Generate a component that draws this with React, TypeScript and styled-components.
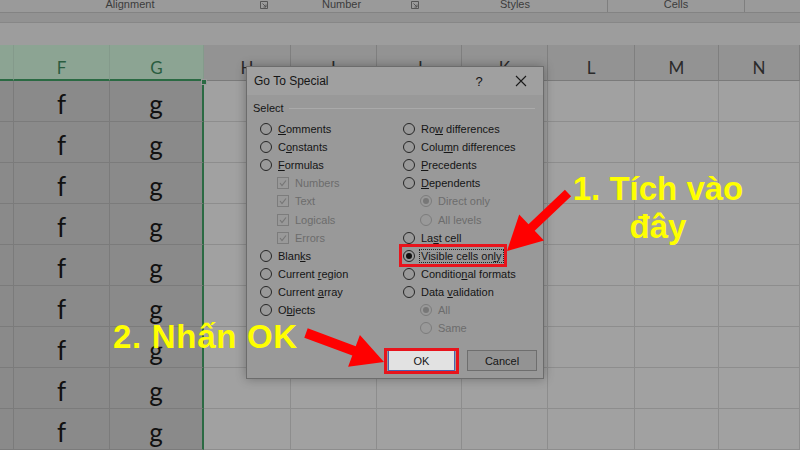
import React from 'react';
import styled, { createGlobalStyle } from 'styled-components';

const GlobalStyle = createGlobalStyle`
  * { box-sizing: border-box; }
  html, body { margin: 0; padding: 0; background: #9b9b9b; }
  body { font-family: "Liberation Sans", Arial, sans-serif; }
`;

const Page = styled.div`
  position: relative;
  width: 800px;
  height: 450px;
  overflow: hidden;
  display: flex;
  flex-direction: column;
  background: #9b9b9b;
`;

// ribbon group captions
const RibbonBar = styled.div`
  display: flex;
  height: 12px;
  background: #9a9a9a;
  overflow: hidden;
  font-size: 11px;
  color: #3c3c3c;
`;

const Group = styled.div<{ $w: number; $sep?: boolean }>`
  display: flex;
  align-items: flex-start;
  width: ${p => p.$w}px;
  flex-shrink: 0;
  border-right: ${p => (p.$sep ? '1px solid #7f7f7f' : 'none')};
`;

const GroupLabel = styled.div`
  flex: 1;
  text-align: center;
  line-height: 11px;
  margin-top: -1px;
`;

const Launcher = styled.svg`
  width: 8px;
  height: 8px;
  margin: 1px 4px 0 0;
`;

const Band = styled.div`
  height: 10px;
  background: #929292;
  border-top: 1px solid #838383;
`;

const FormulaArea = styled.div`
  height: 24px;
  background: #9d9d9d;
  border-top: 1px solid #878787;
`;

const Sheet = styled.div`
  position: relative;
  flex: 1;
  display: flex;
  flex-direction: column;
`;

const HeaderRow = styled.div`
  display: flex;
  height: 36px;
`;

const HeaderCell = styled.div<{ $w: number; $sel?: boolean }>`
  width: ${p => p.$w}px;
  flex-shrink: 0;
  padding-top: 10px;
  text-align: center;
  font-family: Lato, "Open Sans", sans-serif;
  font-size: 17px;
  line-height: 26px;
  background: ${p => (p.$sel ? '#8ca493' : '#939393')};
  color: ${p => (p.$sel ? '#2a5c3f' : '#2a2a2a')};
  border-right: 1px solid ${p => (p.$sel ? '#849a8b' : '#7f7f7f')};
  border-bottom: ${p => (p.$sel ? '2px solid #2b6a43' : '1px solid #7a7a7a')};
`;

const Row = styled.div`
  display: flex;
  height: 41px;
`;

const Cell = styled.div<{ $w: number; $sel?: boolean; $edge?: boolean }>`
  width: ${p => p.$w}px;
  flex-shrink: 0;
  padding-top: 8px;
  text-align: center;
  font-family: Lato, "Open Sans", sans-serif;
  font-size: 26px;
  line-height: 30px;
  color: #111;
  overflow: hidden;
  background: ${p => (p.$sel ? '#8a8a8a' : '#a1a1a1')};
  border-bottom: 1px solid ${p => (p.$sel ? '#7b7b7b' : '#8d8d8d')};
  border-right: ${p =>
    p.$edge ? '2px solid #2b6a43' : `1px solid ${p.$sel ? '#7b7b7b' : '#8d8d8d'}`};
`;

const Handle = styled.div`
  position: absolute;
  left: 201px;
  top: 34px;
  width: 6px;
  height: 6px;
  background: #2b6a43;
  border: 1px solid #9a9a9a;
`;

// dialog
const Dialog = styled.div`
  position: absolute;
  left: 246px;
  top: 66px;
  width: 298px;
  height: 313px;
  display: flex;
  flex-direction: column;
  background: #999999;
  border: 1px solid #6c6c6c;
  box-shadow: 0 0 10px rgba(0, 0, 0, 0.3);
  font-size: 11px;
  color: #151515;
`;

const TitleBar = styled.div`
  display: flex;
  align-items: center;
  height: 28px;
  padding: 0 1px 0 7px;
  background: #a0a0a0;
`;

const Title = styled.div`
  flex: 1;
  font-size: 12px;
`;

const TitleBtn = styled.div`
  width: 42px;
  display: flex;
  justify-content: center;
  align-items: center;
  font-size: 13px;
`;

const Body = styled.div`
  flex: 1;
  display: flex;
  flex-direction: column;
  padding: 0 6px 7px 6px;
`;

const GroupHead = styled.div`
  display: flex;
  align-items: center;
  height: 25px;
`;

const Rule = styled.div`
  flex: 1;
  height: 1px;
  margin: 1px 2px 0 5px;
  background: #aaaaaa;
`;

const Options = styled.div`
  display: grid;
  grid-template-columns: 143px 1fr;
  padding-left: 7px;
`;

const Column = styled.div`
  display: flex;
  flex-direction: column;
`;

const Option = styled.div<{ $indent?: boolean; $off?: boolean }>`
  display: flex;
  align-items: center;
  gap: 4px;
  height: 18.1px;
  padding-left: ${p => (p.$indent ? 17 : 0)}px;
  color: ${p => (p.$off ? '#6c6c6c' : '#151515')};
`;

const Radio = styled.span<{ $on?: boolean; $off?: boolean }>`
  position: relative;
  width: 12px;
  height: 12px;
  flex-shrink: 0;
  border-radius: 50%;
  border: 1px solid ${p => (p.$off ? '#7c7c7c' : '#262626')};
  &::after {
    content: '';
    display: ${p => (p.$on ? 'block' : 'none')};
    position: absolute;
    left: 2px;
    top: 2px;
    width: 6px;
    height: 6px;
    border-radius: 50%;
    background: ${p => (p.$off ? '#777' : '#111')};
  }
`;

const Check = styled.svg`
  width: 12px;
  height: 12px;
  flex-shrink: 0;
  border: 1px solid #7c7c7c;
`;

const Label = styled.span<{ $focus?: boolean }>`
  padding: 0 1px;
  line-height: 12px;
  border: 1px ${p => (p.$focus ? 'dotted #222' : 'solid transparent')};
`;

const Mn = styled.span`
  text-decoration: underline;
`;

const ButtonRow = styled.div`
  margin-top: auto;
  display: flex;
  justify-content: flex-end;
  gap: 12px;
`;

const Button = styled.div<{ $w: number; $primary?: boolean }>`
  width: ${p => p.$w}px;
  height: 21px;
  display: flex;
  align-items: center;
  justify-content: center;
  background: ${p => (p.$primary ? '#e2e2e2' : '#939393')};
  border: 1px solid ${p => (p.$primary ? '#4a64b0' : '#6e6e6e')};
`;

// annotations
const Overlay = styled.svg`
  position: absolute;
  left: 0;
  top: 0;
  pointer-events: none;
`;

const RedBox = styled.div<{ $x: number; $y: number; $w: number; $h: number }>`
  position: absolute;
  left: ${p => p.$x}px;
  top: ${p => p.$y}px;
  width: ${p => p.$w}px;
  height: ${p => p.$h}px;
  border: 3px solid #e8141c;
`;

const Callout = styled.div<{ $x: number; $y: number; $w?: number; $track?: number }>`
  position: absolute;
  left: ${p => p.$x}px;
  top: ${p => p.$y}px;
  width: ${p => (p.$w ? `${p.$w}px` : 'auto')};
  text-align: center;
  white-space: nowrap;
  font-family: "Liberation Sans", Arial, sans-serif;
  font-weight: bold;
  font-size: 33px;
  line-height: 38px;
  letter-spacing: ${p => p.$track ?? 0}px;
  color: #ffff00;
`;

const columns = [
  { w: 14, label: '', sel: true },
  { w: 96, label: 'F', sel: true, text: 'f' },
  { w: 94, label: 'G', sel: true, text: 'g', edge: true },
  { w: 87, label: 'H' },
  { w: 86, label: 'I' },
  { w: 85, label: 'J' },
  { w: 86, label: 'K' },
  { w: 87, label: 'L' },
  { w: 84, label: 'M' },
  { w: 81, label: 'N' },
];

type Opt = {
  text: string;
  key?: number;
  kind: 'radio' | 'check';
  on?: boolean;
  off?: boolean;
  indent?: boolean;
  focus?: boolean;
};

const leftOpts: Opt[] = [
  { text: 'Comments', key: 0, kind: 'radio' },
  { text: 'Constants', key: 1, kind: 'radio' },
  { text: 'Formulas', key: 0, kind: 'radio' },
  { text: 'Numbers', kind: 'check', off: true, indent: true },
  { text: 'Text', kind: 'check', off: true, indent: true },
  { text: 'Logicals', kind: 'check', off: true, indent: true },
  { text: 'Errors', kind: 'check', off: true, indent: true },
  { text: 'Blanks', key: 4, kind: 'radio' },
  { text: 'Current region', key: 8, kind: 'radio' },
  { text: 'Current array', key: 8, kind: 'radio' },
  { text: 'Objects', key: 1, kind: 'radio' },
];

const rightOpts: Opt[] = [
  { text: 'Row differences', key: 2, kind: 'radio' },
  { text: 'Column differences', key: 4, kind: 'radio' },
  { text: 'Precedents', key: 0, kind: 'radio' },
  { text: 'Dependents', key: 0, kind: 'radio' },
  { text: 'Direct only', kind: 'radio', off: true, on: true, indent: true },
  { text: 'All levels', kind: 'radio', off: true, indent: true },
  { text: 'Last cell', key: 2, kind: 'radio' },
  { text: 'Visible cells only', key: 16, kind: 'radio', on: true, focus: true },
  { text: 'Conditional formats', key: 8, kind: 'radio' },
  { text: 'Data validation', key: 5, kind: 'radio' },
  { text: 'All', kind: 'radio', off: true, on: true, indent: true },
  { text: 'Same', kind: 'radio', off: true, indent: true },
];

const withKey = (text: string, key?: number) => {
  if (key === undefined) return text;
  return (
    <>
      {text.slice(0, key)}
      <Mn>{text[key]}</Mn>
      {text.slice(key + 1)}
    </>
  );
};

const OptionRow = ({ o }: { o: Opt }) => (
  <Option $indent={o.indent} $off={o.off}>
    {o.kind === 'radio' ? (
      <Radio $on={o.on} $off={o.off} />
    ) : (
      <Check viewBox="0 0 10 10">
        <polyline points="2,5 4,7.5 8,2.5" fill="none" stroke="#767676" strokeWidth="1.2" />
      </Check>
    )}
    <Label $focus={o.focus}>{withKey(o.text, o.key)}</Label>
  </Option>
);

// polygon for a straight block arrow from tail to tip
const arrow = (tx: number, ty: number, px: number, py: number, shaft: number, headL: number, headW: number) => {
  const dx = px - tx;
  const dy = py - ty;
  const len = Math.hypot(dx, dy);
  const ux = dx / len;
  const uy = dy / len;
  const nx = -uy;
  const ny = ux;
  const bx = px - ux * headL;
  const by = py - uy * headL;
  const s = shaft / 2;
  const h = headW / 2;
  const pts = [
    [tx + nx * s, ty + ny * s],
    [bx + nx * s, by + ny * s],
    [bx + nx * h, by + ny * h],
    [px, py],
    [bx - nx * h, by - ny * h],
    [bx - nx * s, by - ny * s],
    [tx - nx * s, ty - ny * s],
  ];
  return pts.map(p => `${p[0].toFixed(1)},${p[1].toFixed(1)}`).join(' ');
};

const LauncherIcon = () => (
  <Launcher viewBox="0 0 8 8">
    <path d="M0.5 7.5V0.5H7.5V7.5Z" fill="none" stroke="#555" strokeWidth="1" />
    <path d="M2.5 2.5L6 6M6 3.5V6H3.5" fill="none" stroke="#555" strokeWidth="1" />
  </Launcher>
);

export default function App() {
  return (
    <>
      <GlobalStyle />
      <Page>
        <RibbonBar>
          <Group $w={272}>
            <GroupLabel>Alignment</GroupLabel>
            <LauncherIcon />
          </Group>
          <Group $w={151}>
            <GroupLabel>Number</GroupLabel>
            <LauncherIcon />
          </Group>
          <Group $w={185} $sep>
            <GroupLabel>Styles</GroupLabel>
          </Group>
          <Group $w={137} $sep>
            <GroupLabel>Cells</GroupLabel>
          </Group>
        </RibbonBar>
        <Band />
        <FormulaArea />
        <Sheet>
          <HeaderRow>
            {columns.map((c, i) => (
              <HeaderCell key={i} $w={c.w} $sel={c.sel}>
                {c.label}
              </HeaderCell>
            ))}
          </HeaderRow>
          {Array.from({ length: 9 }).map((_, r) => (
            <Row key={r}>
              {columns.map((c, i) => (
                <Cell key={i} $w={c.w} $sel={c.sel} $edge={c.edge}>
                  {c.text}
                </Cell>
              ))}
            </Row>
          ))}
          <Handle />
        </Sheet>

        <Dialog>
          <TitleBar>
            <Title>Go To Special</Title>
            <TitleBtn>?</TitleBtn>
            <TitleBtn>
              <svg width="12" height="12" viewBox="0 0 12 12">
                <path d="M1 1L11 11M11 1L1 11" stroke="#1a1a1a" strokeWidth="1.1" />
              </svg>
            </TitleBtn>
          </TitleBar>
          <Body>
            <GroupHead>
              Select
              <Rule />
            </GroupHead>
            <Options>
              <Column>
                {leftOpts.map(o => (
                  <OptionRow key={o.text} o={o} />
                ))}
              </Column>
              <Column>
                {rightOpts.map(o => (
                  <OptionRow key={o.text} o={o} />
                ))}
              </Column>
            </Options>
            <ButtonRow>
              <Button $w={67} $primary>OK</Button>
              <Button $w={70}>Cancel</Button>
            </ButtonRow>
          </Body>
        </Dialog>

        <RedBox $x={399} $y={244} $w={108} $h={23} />
        <RedBox $x={384} $y={348} $w={75} $h={26} />

        <Overlay width="800" height="450" viewBox="0 0 800 450">
          <polygon points={arrow(568, 193, 507, 251, 9, 34, 36)} fill="#ff0000" />
          <polygon points={arrow(306, 333, 384, 362, 10, 32, 34)} fill="#ff0000" />
        </Overlay>

        <Callout $x={540} $y={170} $w={236}>
          1. Tích vào
          <br />
          đây
        </Callout>
        <Callout $x={113} $y={318} $track={0.7}>
          2. Nhấn OK
        </Callout>
      </Page>
    </>
  );
}
